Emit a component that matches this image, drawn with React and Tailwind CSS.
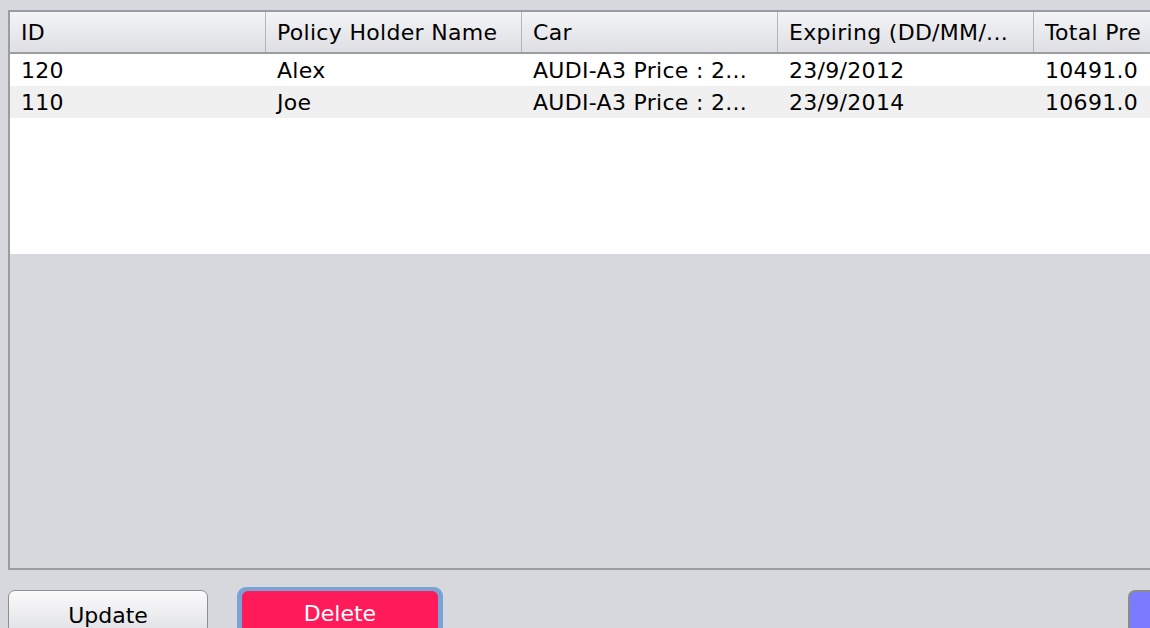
import React from 'react';

const columns = ['ID', 'Policy Holder Name', 'Car', 'Expiring (DD/MM/...', 'Total Pre'];

const rows = [
  ['120', 'Alex', 'AUDI-A3 Price : 2...', '23/9/2012', '10491.0'],
  ['110', 'Joe', 'AUDI-A3 Price : 2...', '23/9/2014', '10691.0'],
];

const App = () => {
  return (
    <div
      className="w-[1150px] h-[628px] overflow-hidden bg-[#d6d8de] pt-[10px] pl-[8px]"
      style={{ fontFamily: '"DejaVu Sans", "Lucida Grande", sans-serif' }}
    >
      {/* Table scroll pane */}
      <div className="w-[1160px] h-[560px] border-2 border-r-0 border-[#9a9ca4] bg-[#d6d8de] flex flex-col">
        <div className="bg-white h-[242px]">
          {/* Header */}
          <div className="flex h-[42px] border-b-2 border-[#9c9da3] bg-gradient-to-b from-[#f3f4f6] to-[#dfe0e4]">
            {columns.map((col, i) => (
              <div
                key={i}
                className={`w-[256px] shrink-0 flex items-center pl-[11px] text-[22px] tracking-[0.3px] text-black whitespace-nowrap overflow-hidden ${
                  i < columns.length - 1 ? 'border-r border-[#b4b5ba]' : ''
                }`}
              >
                {col}
              </div>
            ))}
          </div>
          {/* Rows */}
          {rows.map((row, r) => (
            <div key={r} className={`flex h-[32px] ${r % 2 === 1 ? 'bg-[#f0f0f0]' : 'bg-white'}`}>
              {row.map((cell, c) => (
                <div
                  key={c}
                  className="w-[256px] shrink-0 flex items-center pl-[11px] text-[22px] tracking-[0.3px] text-black whitespace-nowrap overflow-hidden"
                >
                  {cell}
                </div>
              ))}
            </div>
          ))}
        </div>
      </div>

      {/* Buttons */}
      <div className="flex items-start mt-[20px]">
        <button className="w-[200px] h-[50px] rounded-[7px] border border-[#8e8f94] bg-gradient-to-b from-[#fbfbfc] to-[#dcdde1] text-[22px] text-black flex justify-center items-start pt-[8px]">
          Update
        </button>
        <div className="ml-[29px] -mt-[3px] w-[206px] h-[52px] rounded-[9px] bg-[#78a3d4] px-[5px] pt-[4px]">
          <div className="w-full h-full rounded-t-[6px] bg-[#ff1a5a] text-[22px] text-white flex justify-center items-start pt-[6px]">
            Delete
          </div>
        </div>
        <div className="ml-auto w-[22px] h-[50px] rounded-tl-[7px] border-l-2 border-t-2 border-[#8a8a90] bg-[#7b7bff]" />
      </div>
    </div>
  );
};

export default App;
